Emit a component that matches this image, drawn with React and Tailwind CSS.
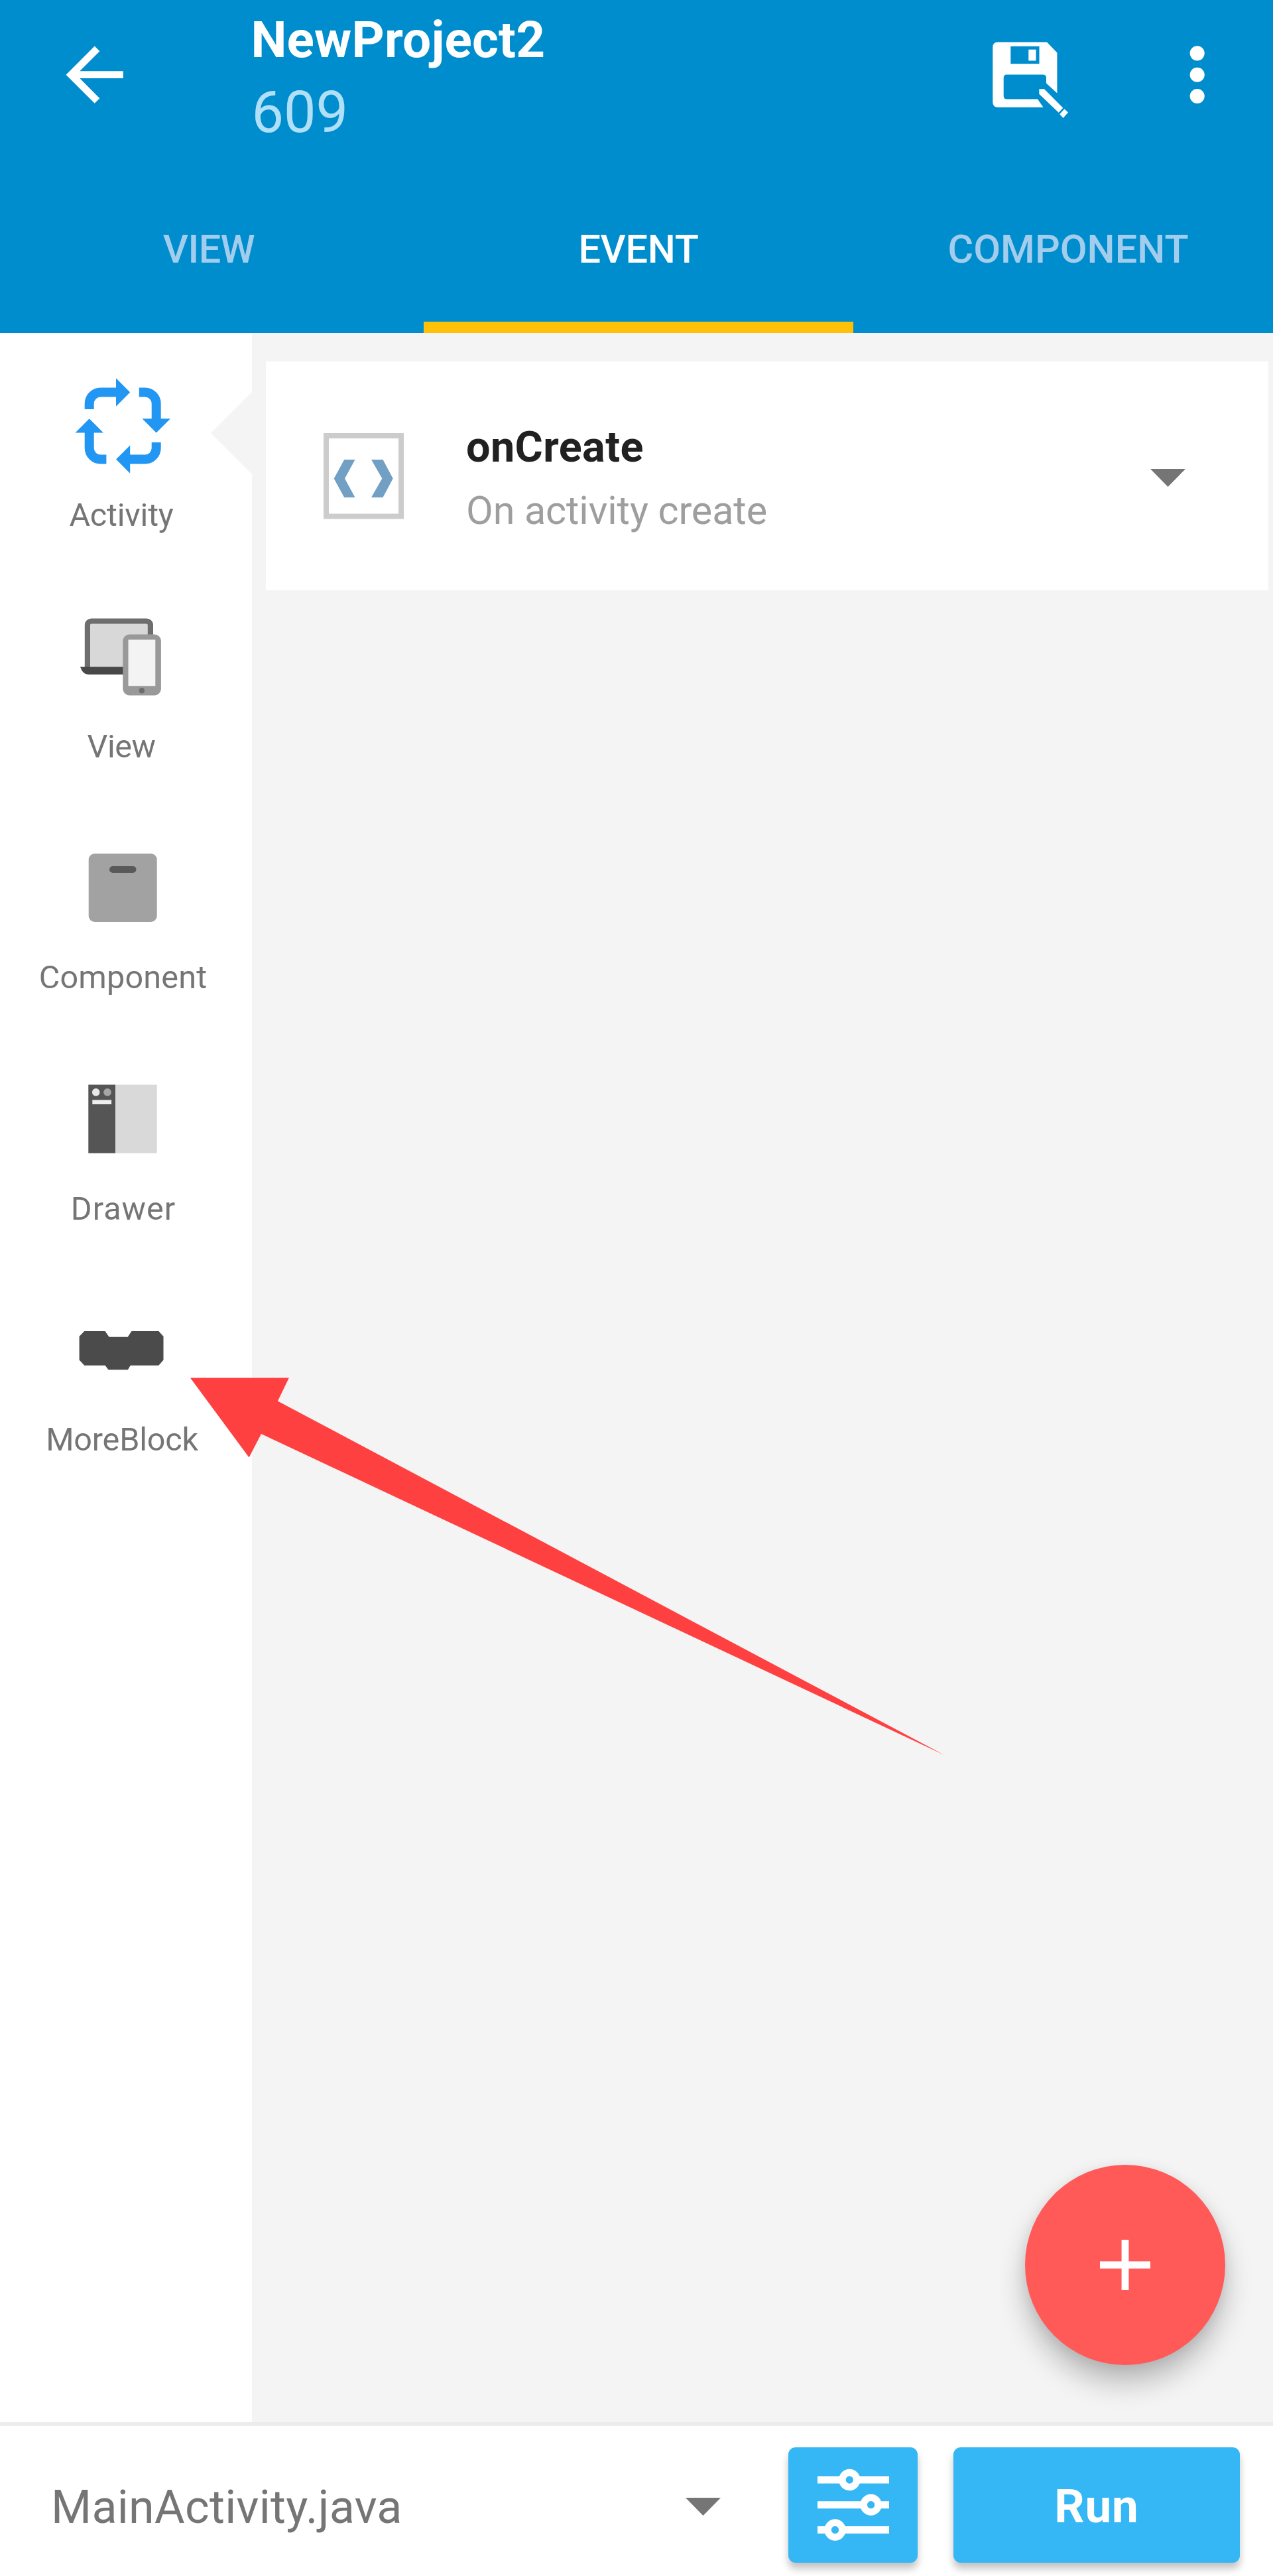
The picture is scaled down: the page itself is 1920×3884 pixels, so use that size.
const iconClass = "h-[160px] w-[160px] shrink-0";

function ActivityIcon() {
  return (
    <svg className={iconClass} viewBox="105 561 160 160">
      <g fill="none" stroke="#2196f3" strokeWidth="14">
        <path d="M134.7 617v-8.500a17 17 0 0 1 17-17H177" />
        <path d="M209.800 591.500h8.900a17 17 0 0 1 17 17V633" />
        <path d="M235.700 667v8.600a17 17 0 0 1-17 17H195" />
        <path d="M160.400 692.600h-8.700a17 17 0 0 1-17-17V651" />
      </g>
      <g fill="#2196f3">
        <path d="M175 570.300v42.400l21.200-21.200z" />
        <path d="M214.500 631.300h42.400l-21.200 21.300z" />
        <path d="M196.200 671.400v42.400L175 692.600z" />
        <path d="M113.500 652.600h42.400l-21.200-21.300z" />
      </g>
    </svg>
  );
}

function ViewIcon() {
  return (
    <svg className={iconClass} viewBox="105 909.5 160 160">
      <rect x="131.900" y="936" width="95" height="76" rx="6" fill="#d8d8d8" stroke="#6e6e6e" strokeWidth="8.200" />
      <path d="M121 1005h70v11.500h-58q-8 0-12-11.500z" fill="#484848" />
      <rect x="185.300" y="956" width="57.600" height="92" rx="10" fill="#999999" />
      <rect x="193.500" y="964" width="40.800" height="69.700" fill="#f3f3f3" />
      <circle cx="213.900" cy="1040.800" r="4.300" fill="#6c6c6c" />
    </svg>
  );
}

function ComponentIcon() {
  return (
    <svg className={iconClass} viewBox="105 1258 160 160">
      <rect x="133.700" y="1287" width="103" height="103" rx="9" fill="#a2a2a2" />
      <rect x="165" y="1306" width="40.500" height="10" rx="5" fill="#595959" />
    </svg>
  );
}

function DrawerIcon() {
  return (
    <svg className={iconClass} viewBox="105 1606.5 160 160">
      <rect x="133.300" y="1635" width="41" height="103.300" fill="#555555" />
      <rect x="174" y="1635" width="62.700" height="103.300" fill="#d9d9d9" />
      <circle cx="144.700" cy="1646.300" r="5.800" fill="#e8e8e8" />
      <circle cx="162" cy="1646.300" r="5.800" fill="#a6a6a6" />
      <rect x="139.300" y="1658" width="28.800" height="6.500" fill="#eeeeee" />
    </svg>
  );
}

function MoreBlockIcon() {
  return (
    <svg className={iconClass} viewBox="105 1955 160 160">
      <path
        d="M127.300 2007h31.200l6 8.800h28.300l5.700-8.800h40.800l7.200 8v35.500l-7.200 8.300h-42.500l-4 6.500h-29.300l-4.900-6.500h-31.300l-7.700-8.300V2015z"
        fill="#4b4b4b"
      />
    </svg>
  );
}

function SaveIcon() {
  return (
    <svg className="h-[130px] w-[130px] shrink-0" viewBox="1491 55 130 130" fill="#ffffff">
      <path
        fillRule="evenodd"
        d="M1505 63.500H1579L1594.400 79.500V140.500L1578 125.500V117.500Q1578 112.500 1573 112.500H1518.500Q1513.700 112.500 1513.700 117.500V144.500Q1513.700 149.500 1518.500 149.500H1565L1573.500 161.700H1505Q1497.300 161.700 1497.300 154V71.200Q1497.300 63.500 1505 63.500ZM1524.300 69.700V96.300H1567.500V69.700Z"
      />
      <rect x="1551.300" y="74.700" width="11.200" height="16.800" />
      <path d="M1567.300 134.300H1575L1603.300 162.700L1596.700 169.800L1567.300 141.700Z" />
      <path d="M1605.300 164.300L1611 169.500L1603.500 178L1598.300 172.300Z" />
    </svg>
  );
}

function Caret() {
  return (
    <svg className="h-[27px] w-[53px] shrink-0" viewBox="0 0 53 27">
      <path d="M0 0H53L26.500 27Z" fill="#757575" />
    </svg>
  );
}

const categories = [
  { label: "Activity", Icon: ActivityIcon, text: "-ml-[3px] tracking-[-0.2px]" },
  { label: "View", Icon: ViewIcon, text: "-ml-[3px] tracking-[-0.5px]" },
  { label: "Component", Icon: ComponentIcon, text: "ml-[2px] tracking-[0.2px]" },
  { label: "Drawer", Icon: DrawerIcon, text: "ml-[3px] tracking-[1px]" },
  { label: "MoreBlock", Icon: MoreBlockIcon, text: "-ml-[1px] tracking-[-0.2px]" },
];

const tabs = [
  { label: "VIEW", color: "text-[#a3cdec] tracking-[-0.6px]", bar: "bg-transparent" },
  { label: "EVENT", color: "text-white tracking-[-0.3px]", bar: "bg-[#ffc107]" },
  { label: "COMPONENT", color: "text-[#a3cdec]", bar: "bg-transparent" },
];

function Header() {
  return (
    <header className="flex h-[502px] shrink-0 flex-col overflow-hidden bg-[#008dcd]">
      <div className="flex h-[250px] items-start">
        <svg className="mt-[48px] ml-[78px] h-[129.400px] w-[129.400px] shrink-0" viewBox="0 0 24 24" fill="#ffffff">
          <path d="M20 11H7.830l5.590-5.590L12 4l-8 8 8 8 1.410-1.410L7.830 13H20v-2z" />
        </svg>
        <div className="ml-[171px] flex flex-1 flex-col pt-[22px]">
          <h1 className="text-[76.5px] leading-[76px] font-bold tracking-[0.2px] text-white">NewProject2</h1>
          <p className="mt-[29px] ml-[1px] text-[86.3px] leading-[86px] text-[#b0e0f7]">609</p>
        </div>
        <div className="mt-[55px]">
          <SaveIcon />
        </div>
        <svg className="mt-[48px] mr-[50px] ml-[120px] h-[129.400px] w-[129.400px] shrink-0" viewBox="0 0 24 24" fill="#ffffff">
          <circle cx="12" cy="6" r="2.050" />
          <circle cx="12" cy="12" r="2.050" />
          <circle cx="12" cy="18" r="2.050" />
        </svg>
      </div>
      <nav className="-ml-[9px] flex flex-1">
        {tabs.map((t) => (
          <div key={t.label} className="flex w-[648px] shrink-0 flex-col items-center">
            <span className={`flex flex-1 items-center pt-[17px] text-[59.3px] leading-none font-medium ${t.color}`}>
              {t.label}
            </span>
            <span className={`h-[17px] w-full ${t.bar}`} />
          </div>
        ))}
      </nav>
    </header>
  );
}

function Sidebar() {
  return (
    <aside className="relative flex w-[380px] shrink-0 flex-col bg-white pr-[11px]">
      {categories.map(({ label, Icon, text }) => (
        <div key={label} className="flex h-[348.500px] flex-col items-center pt-[59px]">
          <Icon />
          <span className={`mt-[32px] text-[48.5px] leading-[48px] text-[#757575] ${text}`}>{label}</span>
        </div>
      ))}
      <svg className="absolute top-[89px] right-0 h-[124px] w-[62px]" viewBox="0 0 62 124">
        <path d="M62 0V124L0 62Z" fill="#f4f4f4" />
      </svg>
    </aside>
  );
}

function EventCard() {
  return (
    <div className="mt-[43px] mr-[7px] ml-[21px] flex h-[345px] bg-white pl-[87px]">
      <svg className="mt-[108px] h-[130px] w-[121px] shrink-0" viewBox="488 653 121 130">
        <rect x="492" y="657" width="113" height="121.500" fill="none" stroke="#cccccc" strokeWidth="8" />
        <g fill="#729fc4">
          <path d="M535.500 693H519.200L503.700 721.600L519.200 750H535.500L520 721.600Z" />
          <path d="M560 693H577.500L592.700 721.600L577.500 750H560L576.300 721.600Z" />
        </g>
      </svg>
      <div className="ml-[94px] flex flex-1 flex-col pt-[97px]">
        <span className="text-[64.7px] leading-[64px] font-bold tracking-[0.4px] text-[#212121]">onCreate</span>
        <span className="mt-[34px] text-[59.3px] leading-[59px] tracking-[-0.1px] text-[#9e9e9e]">On activity create</span>
      </div>
      <div className="mt-[162px] mr-[125px]">
        <Caret />
      </div>
    </div>
  );
}

function Footer() {
  return (
    <footer className="flex h-[232px] shrink-0 border-t-[6px] border-[#ececec] bg-white">
      <div className="flex w-[1189px] shrink-0 items-start">
        <span className="mt-[87px] ml-[77px] text-[70px] leading-[70px] tracking-[0.3px] text-[#757575]">MainActivity.java</span>
        <div className="mt-[108px] mr-[102px] ml-auto">
          <Caret />
        </div>
      </div>
      <button className="mt-[32px] h-[174px] w-[195px] rounded-[11px] bg-[#35b6f5] shadow-[0_9px_12px_rgba(0,0,0,0.24)]">
        <svg className="h-[174px] w-[195px]" viewBox="1189 3690 195 174">
          <g stroke="#ffffff" strokeWidth="11">
            <path d="M1233 3739H1341M1233 3776.700H1341M1233 3814.500H1341" />
            <g fill="#35b6f5" strokeWidth="10.500">
              <circle cx="1281.300" cy="3739" r="10.900" />
              <circle cx="1313.600" cy="3776.700" r="10.900" />
              <circle cx="1259.500" cy="3814.500" r="10.900" />
            </g>
          </g>
        </svg>
      </button>
      <button className="mt-[32px] ml-[54px] h-[174px] w-[432px] rounded-[11px] bg-[#35b6f5] pt-[3px] text-[71px] leading-none font-bold tracking-[0.8px] text-white shadow-[0_9px_12px_rgba(0,0,0,0.24)]">
        Run
      </button>
    </footer>
  );
}

export default function App() {
  return (
    <div className="relative flex h-[3884px] w-[1920px] flex-col overflow-hidden bg-white font-['Roboto',sans-serif]">
      <Header />
      <div className="flex min-h-0 flex-1">
        <Sidebar />
        <main className="relative flex-1 bg-[#f4f4f4]">
          <div className="flex flex-col">
            <EventCard />
          </div>
          <button className="absolute right-[72px] bottom-[86px] flex h-[302px] w-[302px] items-center justify-center rounded-full bg-[#ff5a57] shadow-[0_27px_42px_rgba(0,0,0,0.24),0_4px_20px_rgba(0,0,0,0.08)]">
            <svg className="h-[76px] w-[76px]" viewBox="0 0 76 76" fill="#ffffff">
              <path d="M32.600 0H43.400V32.600H76V43.400H43.400V76H32.600V43.400H0V32.600H32.600Z" />
            </svg>
          </button>
        </main>
      </div>
      <Footer />
      <svg className="absolute top-[2070px] left-[280px] h-[590px] w-[1160px]" viewBox="280 2070 1160 590">
        <path d="M287 2077.500H435.800L418.900 2112.500L1424 2646L394 2162L375.600 2197.500Z" fill="#ff4041" />
      </svg>
    </div>
  );
}
